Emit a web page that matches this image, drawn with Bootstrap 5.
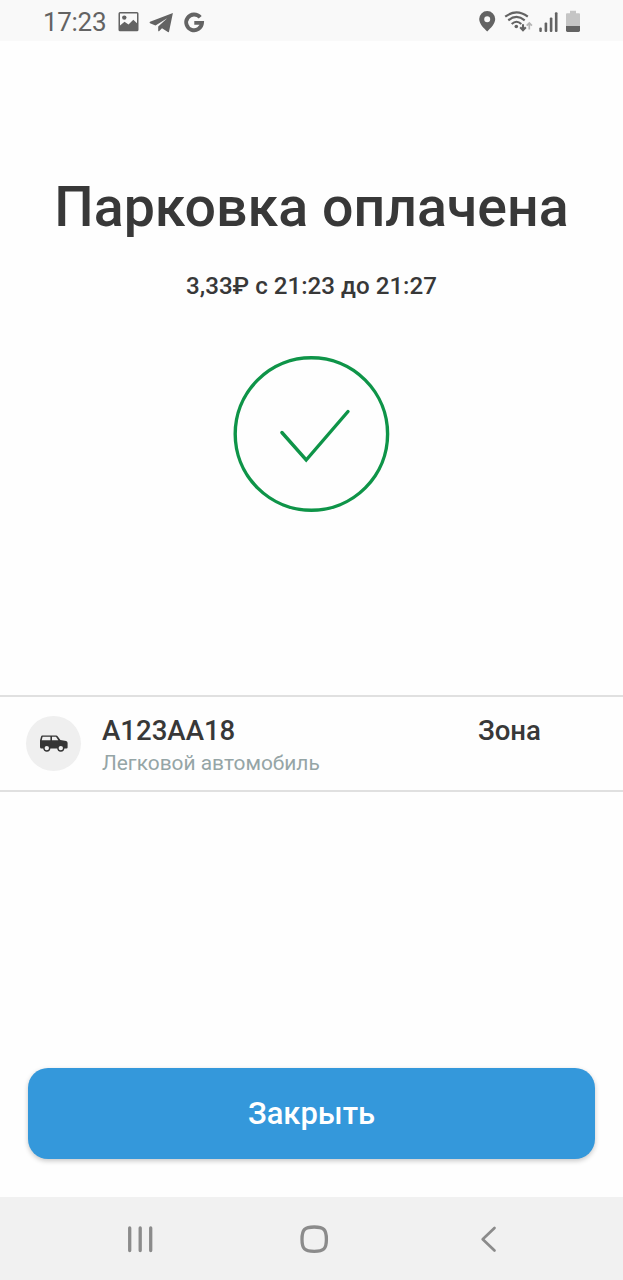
<!DOCTYPE html>
<html lang="ru">
<head>
<meta charset="utf-8">
<meta name="viewport" content="width=device-width, initial-scale=1">
<title>Парковка оплачена</title>
<link href="https://cdn.jsdelivr.net/npm/bootstrap@5.3.0/dist/css/bootstrap.min.css" rel="stylesheet">
<style>
  body { font-family: Roboto, "Noto Sans", sans-serif; color: #383838; }
  svg { display: block; flex: none; }
  .screen { height: 1280px; overflow: hidden; background: #fefefe; }
  .status-bar { height: 41px; padding: 0 42px 0 43px; background: #f9f9f9; color: #636363; }
  .clock { font-size: 26px; line-height: 42px; letter-spacing: -.3px; width: 74px; padding-top: 2px; }
  .result { height: 654px; padding-top: 134px; }
  .title { font-size: 55.5px; line-height: 66px; font-weight: 500; }
  .period { font-size: 24.150px; line-height: 28px; font-weight: 500; margin-top: 31px; }
  .done { margin-top: 54px; }
  .vehicle { height: 97px; border-top: 2px solid #e0e0e0; border-bottom: 2px solid #e0e0e0; padding: 0 82px 0 26px; }
  .avatar { width: 55px; height: 55px; background: #efefef; margin: 19px 21px 0 0; }
  .plate { font-size: 27.600px; line-height: 32px; font-weight: 500; margin-top: 18px; }
  .kind { font-size: 20.900px; line-height: 26px; color: #95a5a6; margin-top: 3px; }
  .action { padding: 0 28px 38px; }
  .btn-close-parking { height: 91px; border-radius: 20px; font-size: 30.900px; font-weight: 500; color: #fff; background: #3498db; border: 0; box-shadow: 0 2px 5px rgba(0,0,0,.22); padding: 2px 0 0; }
  .system-nav { height: 83px; background: #f1f1f1; }
</style>
</head>
<body>
<div class="screen d-flex flex-column">
  <header class="status-bar d-flex align-items-center">
    <span class="clock">17:23</span>
    <svg width="88" height="41" viewBox="117 0 88 41" fill="currentColor" aria-hidden="true">
      <path fill-rule="evenodd" d="M120 12h17q1.500 0 1.500 1.500v16.300q0 1.500-1.500 1.500h-17q-1.500 0-1.500-1.500v-16.300q0-1.500 1.500-1.500ZM120 13.600v11.800l4.500-3.600 4 2.800 4.800-4.900 3.700 3.600v-9.700Z"/>
      <circle cx="124.300" cy="17.600" r="2.200"/>
      <path d="M150 21.700 172.900 13.100 169 31.800Q168.700 32.500 167.900 32L162 28.200 159 31.200Q158.300 31.600 158.200 30.800V26.600L167.200 18.200 155.500 25.600 150 23.300Q149 22.400 150 21.700Z"/>
      <path d="M200.200 17.300A7.900 7.900 0 1 0 202 22.900H194.300" fill="none" stroke="currentColor" stroke-width="3.900"/>
    </svg>
    <svg class="ms-auto" width="103" height="41" viewBox="478 0 103 41" fill="currentColor" aria-hidden="true">
      <path fill-rule="evenodd" d="M487.200 11a8 8 0 0 1 8 8.100c0 5-4.700 9.200-8 12.400-3.300-3.200-8-7.400-8-12.400a8 8 0 0 1 8-8.100Zm0 5.200a3 3 0 1 0 0 6 3 3 0 0 0 0-6Z"/>
      <g fill="none" stroke="currentColor" stroke-width="2.100">
        <path d="M505.200 16.700Q516.500 8 527.800 16.700M508.300 20.400Q516.500 13.500 524.700 20.400M511.700 24Q516.500 19.500 521.300 24"/>
        <path d="M523 24.300v5.500M520.200 27.200l2.800 3 2.800-3"/>
        <path d="M529.300 29.500v-6M526.700 25.700l2.600-2.800 2.600 2.800" stroke="#b5b5b5" stroke-width="1.700"/>
      </g>
      <circle cx="516.300" cy="26.500" r="1.800"/>
      <rect x="539.300" y="27.400" width="2.500" height="4.600" rx="1"/>
      <rect x="544.600" y="22.600" width="2.600" height="9.400" rx="1"/>
      <rect x="549.800" y="17.500" width="2.600" height="14.500" rx="1"/>
      <rect x="554.900" y="12.200" width="2.600" height="19.800" rx="1"/>
      <path d="M570 10.800h6v2.500h3q1 0 1 1V26h-14V14.300q0-1 1-1h3Z" fill="#c5c5c5"/>
      <path d="M566 26h14v4.600q0 1.400-1.400 1.400h-11.200q-1.400 0-1.400-1.400Z"/>
    </svg>
  </header>

  <main class="flex-grow-1 d-flex flex-column">
    <section class="result d-flex flex-column align-items-center text-center">
      <h1 class="title mb-0 text-nowrap">Парковка оплачена</h1>
      <p class="period mb-0">3,33₽ с 21:23 до 21:27</p>
      <svg class="done" width="161" height="160" viewBox="0 0 161 160" fill="none" stroke="#0e9448" stroke-width="3.400" stroke-linecap="round" aria-hidden="true">
        <circle cx="80.400" cy="80" r="76.200"/>
        <path d="M50.900 78.500 75.200 106 117 57.500"/>
      </svg>
    </section>

    <section class="vehicle d-flex">
      <div class="avatar rounded-circle d-flex align-items-center justify-content-center">
        <svg width="28" height="17" viewBox="0 0 28 17" aria-hidden="true">
          <path fill="#343434" d="M2.300.5h13.800q1.100 0 1.700 1L20.400 5l5.700 1.100q1.500.4 1.500 2v4.500q0 1-1.200 1H1.500Q0 13.600 0 12V5.400L1 1.700Q1.300.5 2.300.5Z"/>
          <path fill="#efefef" d="M2.600 1.700h7.800v3.500H1.700ZM12 1.700h4l2.300 3.500H12Z"/>
          <g fill="#efefef" stroke="#343434" stroke-width="1.400"><circle cx="6.800" cy="13.100" r="2.900"/><circle cx="20.800" cy="13.100" r="2.900"/></g>
        </svg>
      </div>
      <div>
        <div class="plate">А123АА18</div>
        <div class="kind">Легковой автомобиль</div>
      </div>
      <div class="plate ms-auto">Зона</div>
    </section>

    <div class="action mt-auto">
      <button type="button" class="btn btn-close-parking w-100">Закрыть</button>
    </div>
  </main>

  <nav class="system-nav" aria-label="Навигация">
    <svg width="623" height="83" viewBox="0 1197 623 83" fill="none" stroke="#8b8b8b" stroke-width="3.300" stroke-linecap="round" stroke-linejoin="round" aria-hidden="true">
      <path d="M129.700 1228v22.500M140.200 1228v22.500M150.700 1228v22.500"/>
      <path d="M314.200 1227c9.600 0 12.200 2.500 12.200 12.200s-2.600 12.200-12.200 12.200-12.200-2.500-12.200-12.200 2.600-12.200 12.200-12.200Z"/>
      <path d="M494.500 1228 482.700 1239.200 494.500 1250.500" stroke-width="2.700"/>
    </svg>
  </nav>
</div>
<script src="https://cdn.jsdelivr.net/npm/bootstrap@5.3.0/dist/js/bootstrap.bundle.min.js"></script>
</body>
</html>
